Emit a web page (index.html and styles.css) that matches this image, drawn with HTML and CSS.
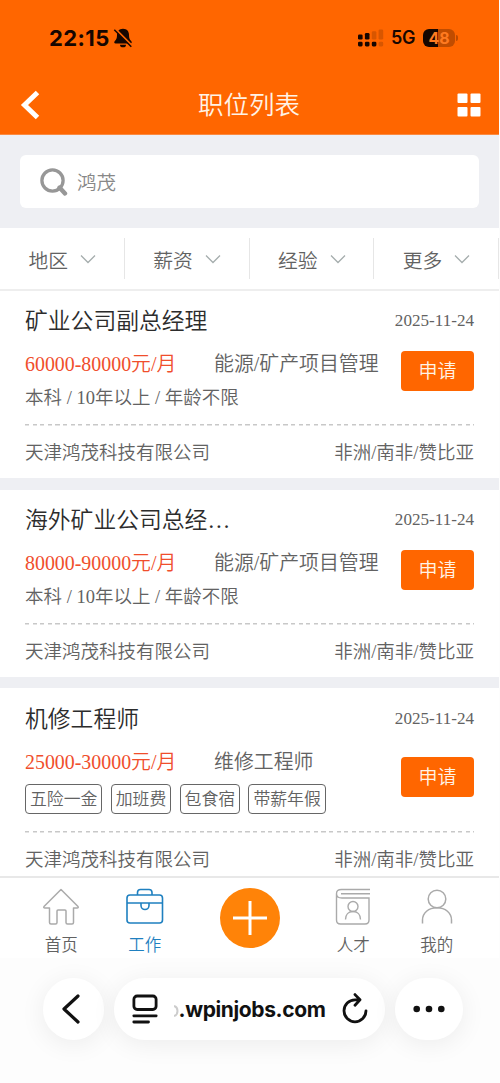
FILE: index.html
```html
<!DOCTYPE html>
<html lang="zh-CN">
<head>
<meta charset="utf-8">
<title>职位列表</title>
<link rel="stylesheet" href="styles.css">
</head>
<body>
<div class="app">
  <header class="header">
    <div class="status">
      <span class="time">22:15</span>
      <svg class="bell" width="20" height="20" viewBox="0 0 20 20"><path d="M10 .8C6 .8 4 3.600 4 7.200c0 3-.8 4.300-2.200 5.800-1 1.200-.6 2.500.8 2.500h14.800c1.400 0 1.800-1.300.8-2.500C16.800 11.500 16 10.200 16 7.200 16 3.600 14 .8 10 .8z" fill="#160600"/><path d="M7 16.700h6a3 2.600 0 0 1-6 0z" fill="#160600"/><path d="M2.300 1.100 18.800 17.600" stroke="#f60" stroke-width="2.200"/><path d="M1.300 1.800 18.300 18.800" stroke="#160600" stroke-width="1.500"/></svg>
      <svg class="signal" width="26" height="18" viewBox="0 0 26 18"><g fill="#160600"><rect x="0" y="5.500" width="4.600" height="5" rx="1.300"/><rect x="6.900" y="4" width="4.600" height="6.500" rx="1.300"/><rect x="0" y="12.800" width="4.600" height="4.600" rx="1.300"/><rect x="6.900" y="12.800" width="4.600" height="4.600" rx="1.300"/><rect x="13.800" y="12.800" width="4.600" height="4.600" rx="1.300"/></g><g fill="#d85600"><rect x="13.800" y="2.300" width="4.600" height="8.200" rx="1.300"/><rect x="20.600" y=".5" width="4.600" height="10" rx="1.300"/><rect x="20.600" y="12.800" width="4.600" height="4.600" rx="1.300"/></g></svg>
      <span class="net">5G</span>
      <span class="battery">48</span><span class="cap"></span>
    </div>
    <div class="nav">
      <svg width="20" height="30" viewBox="0 0 20 30"><path d="M17.500 2.500 4.500 15l13 12.500" fill="none" stroke="#fff" stroke-width="5"/></svg>
      <h1 class="nav-title">职位列表</h1>
      <svg width="24" height="24" viewBox="0 0 24 24" fill="#fff"><rect x=".5" y=".5" width="10" height="9.500" rx="1"/><rect x="13.500" y=".5" width="10" height="9.500" rx="1"/><rect x=".5" y="14" width="10" height="9.500" rx="1"/><rect x="13.500" y="14" width="10" height="9.500" rx="1"/></svg>
    </div>
  </header>
  <div class="search">
    <div class="search-box">
      <svg width="28" height="28" viewBox="0 0 28 28" fill="none" stroke="#979797"><circle cx="12.500" cy="12.500" r="10.600" stroke-width="3.300"/><path d="m19.500 19.500 5.500 6" stroke-width="4.400" stroke-linecap="round"/></svg>
      <span>鸿茂</span>
    </div>
  </div>
  <div class="filters">
    <div class="filter">地区<svg width="16" height="10" viewBox="0 0 16 10"><path d="m1 1.500 7 7 7-7"/></svg></div>
    <div class="filter">薪资<svg width="16" height="10" viewBox="0 0 16 10"><path d="m1 1.500 7 7 7-7"/></svg></div>
    <div class="filter">经验<svg width="16" height="10" viewBox="0 0 16 10"><path d="m1 1.500 7 7 7-7"/></svg></div>
    <div class="filter">更多<svg width="16" height="10" viewBox="0 0 16 10"><path d="m1 1.500 7 7 7-7"/></svg></div>
  </div>
  <main class="jobs">
    <article class="job">
      <div class="job-head"><h2 class="job-title">矿业公司副总经理</h2><time class="date">2025-11-24</time></div>
      <div class="job-body">
        <div class="info">
          <div class="pay-row"><span class="pay">60000-80000元/月</span><span>能源/矿产项目管理</span></div>
          <div class="req">本科 / 10年以上 / 年龄不限</div>
        </div>
        <button class="apply">申请</button>
      </div>
      <div class="job-foot"><span>天津鸿茂科技有限公司</span><span>非洲/南非/赞比亚</span></div>
    </article>
    <article class="job">
      <div class="job-head"><h2 class="job-title">海外矿业公司总经…</h2><time class="date">2025-11-24</time></div>
      <div class="job-body">
        <div class="info">
          <div class="pay-row"><span class="pay">80000-90000元/月</span><span>能源/矿产项目管理</span></div>
          <div class="req">本科 / 10年以上 / 年龄不限</div>
        </div>
        <button class="apply">申请</button>
      </div>
      <div class="job-foot"><span>天津鸿茂科技有限公司</span><span>非洲/南非/赞比亚</span></div>
    </article>
    <article class="job tagged">
      <div class="job-head"><h2 class="job-title">机修工程师</h2><time class="date">2025-11-24</time></div>
      <div class="job-body">
        <div class="info">
          <div class="pay-row"><span class="pay">25000-30000元/月</span><span>维修工程师</span></div>
          <div class="tags"><span class="tag">五险一金</span><span class="tag">加班费</span><span class="tag">包食宿</span><span class="tag">带薪年假</span></div>
        </div>
        <button class="apply">申请</button>
      </div>
      <div class="job-foot"><span>天津鸿茂科技有限公司</span><span>非洲/南非/赞比亚</span></div>
    </article>
  </main>
  <nav class="tabs">
    <a class="tab"><svg width="38" height="38" viewBox="0 0 38 38" fill="none" stroke="#aaa" stroke-width="1.500" stroke-linejoin="round"><path d="M19 1.500 36 18.500q.8 1.500-1 1.500h-3.500v14.500q0 1.500-1.500 1.500h-4.500q-1.500 0-1.500-1.500V23q0-1-1-1h-7q-1 0-1 1v11.500q0 1.500-1.500 1.500H9q-1.500 0-1.500-1.500V20H3q-1.800 0-1-1.500z"/></svg>首页</a>
    <a class="tab active"><svg width="38" height="38" viewBox="0 0 38 38" fill="none" stroke="#1f80c0" stroke-width="1.600"><rect x="1" y="7" width="35.500" height="28" rx="3"/><path d="M11.500 7V4.500q0-3 3-3h8.500q3 0 3 3V7M1 15h35.500M15 15v2.500a4 4 0 0 0 8 0V15"/></svg>工作</a>
    <a class="add"><svg width="60" height="60" viewBox="0 0 60 60"><circle cx="30" cy="30" r="30" fill="#ff8308"/><path d="M30 13v34M13 30h34" stroke="#fff" stroke-width="3"/></svg></a>
    <a class="tab"><svg width="38" height="38" viewBox="0 0 38 38" fill="none" stroke="#aaa" stroke-width="1.400"><path d="M36 1.500H7.500Q2.500 1.500 2.500 5.800V32q0 4 4 4H31q4 0 4-4V10H8q-5.500 0-5.500-4.200M36 5.800H7"/><circle cx="19" cy="18.500" r="5"/><path d="M11.500 31.500c0-5 3-8 7.500-8s7.500 3 7.500 8"/></svg>人才</a>
    <a class="tab"><svg width="38" height="38" viewBox="0 0 38 38" fill="none" stroke="#aaa" stroke-width="1.500"><circle cx="19" cy="11" r="8.800"/><path d="M4.500 35.500V32c0-7 6-12.200 14.500-12.200S33.500 25 33.500 32v3.500"/></svg>我的</a>
  </nav>
</div>
<footer class="browser">
  <div class="glass back"><svg width="20" height="32" viewBox="0 0 20 32"><path d="M17 3 3 16l14 13" fill="none" stroke="#111" stroke-width="3.200" stroke-linecap="round" stroke-linejoin="round"/></svg></div>
  <div class="glass address">
    <svg width="26" height="30" viewBox="0 0 26 30" fill="none" stroke="#111" stroke-width="2.800" stroke-linecap="round"><rect x="1.900" y="2" width="22.200" height="13.500" rx="3.200"/><path d="M1.800 21.800h22.400M1.800 28h14.700"/></svg>
    <span class="url"><svg class="fade" width="5" height="12" viewBox="0 0 5 12"><path d="M0 1q3.500 1 3.500 5T0 11" fill="none" stroke="#ccc" stroke-width="2"/></svg>.wpinjobs.com</span>
    <svg width="26" height="32" viewBox="0 0 26 32" fill="none" stroke="#111" stroke-width="2.800" stroke-linecap="round" stroke-linejoin="round"><path d="M17.800 6.800H13a11 11 0 1 0 11 11M13 1.600l5 5.200-5 5.400"/></svg>
  </div>
  <div class="glass more"><svg width="32" height="8" viewBox="0 0 32 8" fill="#111"><circle cx="3.700" cy="4" r="3.300"/><circle cx="16" cy="4" r="3.300"/><circle cx="28.300" cy="4" r="3.300"/></svg></div>
</footer>
</body>
</html>
```
FILE: styles.css
```css
* { box-sizing: border-box; }
body {
  margin: 0;
  height: 1083px;
  overflow: hidden;
  background: #fdfdfd;
  color: #626262;
  font-family: "Liberation Serif", "Noto Sans CJK SC", serif;
  font-weight: 350;
}
svg { display: block; flex: none; }
h1, h2 { margin: 0; font-weight: 350; }

.app { width: 499px; }

.header { height: 135px; background: #f60; border-bottom: 1px solid #fb8a40; }
.status {
  display: flex;
  align-items: center;
  height: 75px;
  padding-left: 49px;
  font-family: Inter, sans-serif;
  color: #160600;
}
.time { width: 64px; font-size: 22px; font-weight: 750; letter-spacing: .4px; }
.signal { margin-left: 225px; }
.net { width: 32px; margin-left: 7px; font-size: 18px; font-weight: 600; letter-spacing: -.4px; }
.battery {
  width: 32px;
  height: 18px;
  border-radius: 6px;
  background: linear-gradient(90deg, #160600 47%, #c04c00 47%);
  color: #ff7a20;
  font-size: 16px;
  font-weight: 700;
  line-height: 18px;
  text-align: center;
}
.cap { width: 2px; height: 6px; margin-left: 1px; border-radius: 0 2px 2px 0; background: #bd4b00; }
.nav { display: flex; align-items: center; justify-content: space-between; height: 59px; padding: 0 18px 0 20px; }
.nav-title { padding: 2px 0 0 1px; font-size: 25.500px; line-height: 36px; color: #fff3e6; }

.search { height: 93px; padding: 20px; background: #eeeff3; }
.search-box {
  display: flex;
  align-items: center;
  gap: 9px;
  height: 53px;
  padding-left: 20px;
  border-radius: 6px;
  background: #fff;
  color: #888;
  font-size: 19.500px;
}

.filters { display: flex; align-items: center; height: 63px; border-bottom: 2px solid #eee; background: #fff; }
.filter {
  display: flex;
  align-items: center;
  gap: 12px;
  width: 124.750px;
  height: 41px;
  padding: 1px 0 0 28.500px;
  border-right: 1px solid #e6e6e6;
  font-size: 19.800px;
}
.filter path { fill: none; stroke: #a5adad; stroke-width: 1.300; }

.jobs { display: flex; flex-direction: column; gap: 11.500px; height: 585px; overflow: hidden; background: #eeeff3; }
.job { flex: none; height: 187px; padding: 0 25px; background: #fff; }
.job.tagged { height: 196px; }
.job-head { display: flex; align-items: center; justify-content: space-between; height: 60px; }
.job-title {
  padding-top: 2px;
  color: #2c2c2c;
  font-size: 22.800px;
  line-height: 34px;
  white-space: nowrap;
}
.date { font-size: 17.100px; }
.job-body { display: flex; justify-content: space-between; height: 73px; }
.pay-row { display: flex; height: 27px; font-size: 19.900px; line-height: 26px; white-space: nowrap; }
.pay { width: 189px; color: #f04e2c; }
.req { height: 40px; font-size: 18.500px; line-height: 40px; }
.apply {
  width: 73px;
  height: 40px;
  padding: 0 0 2px;
  border: 0;
  border-radius: 4px;
  background: #f60;
  color: #fff3e6;
  font: 350 19px/38px "Noto Sans CJK SC", sans-serif;
}
.job-foot {
  display: flex;
  justify-content: space-between;
  height: 54px;
  background: repeating-linear-gradient(90deg, #c8c8c8 0 4.200px, transparent 4.200px 7.600px) top / 100% 1.500px no-repeat;
  font-size: 18.500px;
  line-height: 59px;
}
.tagged .job-head { padding-top: 1px; }
.tagged .job-body { height: 82.500px; }
.tagged .apply { margin-top: 9px; }
.tagged .pay-row { line-height: 28px; }
.tagged .job-foot { line-height: 59px; }
.tags { display: flex; gap: 8.300px; margin-top: 9px; }
.tag { height: 30px; padding: 0 4px; border: 1px solid #666; border-radius: 4px; font-size: 16.850px; line-height: 29px; white-space: nowrap; }

.tabs { display: flex; height: 82px; padding-left: 19.500px; border-top: 2px solid #e8e8e8; background: #fff; }
.tab { display: flex; flex-direction: column; align-items: center; width: 83.500px; padding-top: 10px; font-size: 16.500px; line-height: 39px; }
.tab.active { color: #1f80c0; }
.add { width: 125px; padding: 10px 0 0 33px; }

.browser { display: flex; align-items: flex-start; gap: 10px; height: 125px; padding: 20px 0 0 43px; }
.glass {
  display: flex;
  align-items: center;
  justify-content: center;
  height: 62px;
  border-radius: 31px;
  background: #fff;
  box-shadow: 0 4px 26px rgba(0, 0, 0, .07);
}
.back { width: 61px; padding-right: 5px; }
.address { justify-content: space-between; width: 271px; padding: 0 17px 0 18px; }
.more { width: 68px; }
.url { display: flex; align-items: center; margin: 0 4px 0 3px; font-family: Inter, sans-serif; font-size: 21px; font-weight: 650; letter-spacing: -.38px; color: #111; }
.fade { margin-top: 4px; }
```
